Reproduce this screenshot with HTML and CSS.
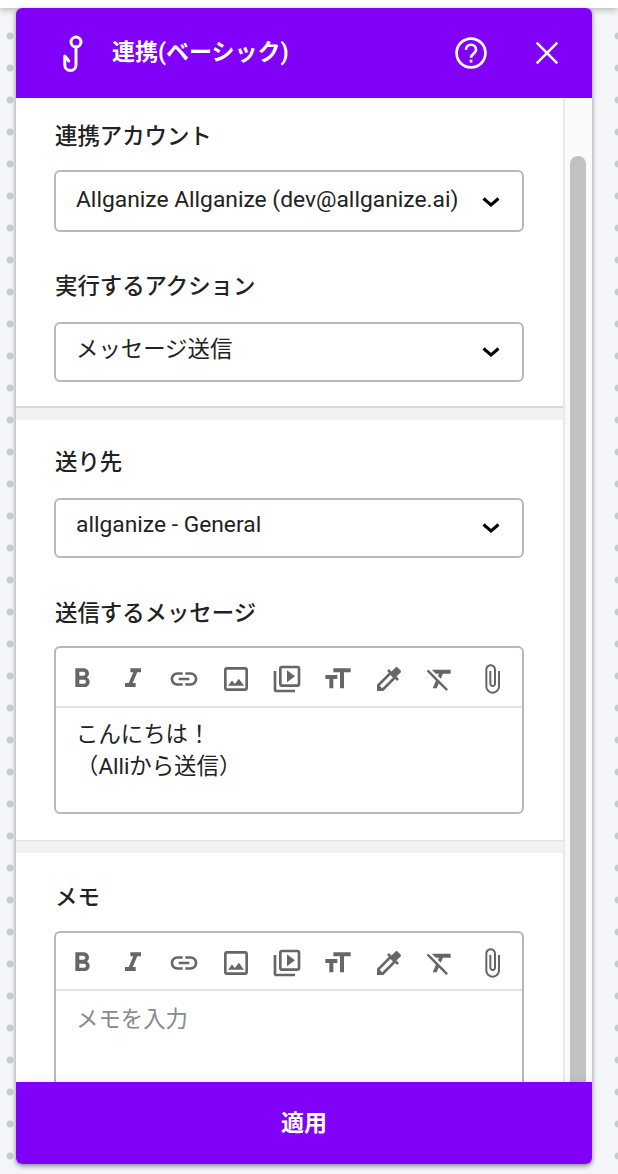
FILE: index.html
```html
<!DOCTYPE html>
<html lang="ja">
<head>
<meta charset="utf-8">
<title>連携(ベーシック)</title>
<link rel="stylesheet" href="styles.css">
</head>
<body>
<svg class="defs" width="0" height="0" aria-hidden="true">
  <symbol id="i-bold" viewBox="0 0 24 24"><path d="M15.6 10.79c.97-.67 1.65-1.77 1.65-2.79 0-2.26-1.75-4-4-4H7v14h7.04c2.09 0 3.71-1.7 3.71-3.79 0-1.52-.86-2.82-2.15-3.42zM10 6.5h3c.83 0 1.5.67 1.5 1.5s-.67 1.5-1.5 1.5h-3v-3zm3.5 9H10v-3h3.5c.83 0 1.5.67 1.5 1.5s-.67 1.5-1.5 1.5z"/></symbol>
  <symbol id="i-italic" viewBox="0 0 24 24"><path d="M10 4v3h2.21l-3.42 8H6v3h8v-3h-2.21l3.42-8H18V4z"/></symbol>
  <symbol id="i-link" viewBox="0 0 24 24"><path d="M3.9 12c0-1.71 1.39-3.1 3.1-3.1h4V7H7c-2.76 0-5 2.24-5 5s2.24 5 5 5h4v-1.9H7c-1.71 0-3.1-1.39-3.1-3.1zM8 13h8v-2H8v2zm9-6h-4v1.9h4c1.71 0 3.1 1.39 3.1 3.1s-1.39 3.1-3.1 3.1h-4V17h4c2.76 0 5-2.24 5-5s-2.24-5-5-5z"/></symbol>
  <symbol id="i-image" viewBox="0 0 24 24"><path d="M19 5v14H5V5h14m0-2H5c-1.1 0-2 .9-2 2v14c0 1.1.9 2 2 2h14c1.1 0 2-.9 2-2V5c0-1.1-.9-2-2-2zm-4.86 8.86l-3 3.87L9 13.14 6 17h12l-3.86-5.14z"/></symbol>
  <symbol id="i-video" viewBox="0 0 24 24"><path d="M4 6H2v14c0 1.1.9 2 2 2h14v-2H4V6zm16-4H8c-1.1 0-2 .9-2 2v12c0 1.1.9 2 2 2h12c1.1 0 2-.9 2-2V4c0-1.1-.9-2-2-2zm0 14H8V4h12v12zM12 5.5v9l6-4.5z"/></symbol>
  <symbol id="i-size" viewBox="0 0 24 24"><path transform="matrix(-1 0 0 1 24 0)" d="M2.5 4v3h5v12h3V7h5V4h-13zm19 5h-9v3h3v7h3v-7h3V9z"/></symbol>
  <symbol id="i-color" viewBox="0 0 24 24"><path d="M20.71 5.63l-2.34-2.34c-.39-.39-1.02-.39-1.41 0l-3.12 3.12-1.93-1.91-1.41 1.41 1.42 1.42L3 16.25V21h4.75l8.92-8.92 1.42 1.42 1.41-1.41-1.92-1.92 3.12-3.12c.4-.4.4-1.03.01-1.42zM6.92 19L5 17.08l8.06-8.06 1.92 1.92L6.92 19z"/></symbol>
  <symbol id="i-clear" viewBox="0 0 24 24"><path d="M3.27 5L2 6.27l6.97 6.97L6.5 19h3l1.57-3.66L16.73 21 18 19.73 3.55 5.27 3.27 5zM6 5v.18L8.82 8h2.4l-.72 1.68 2.1 2.1L14.21 8H20V5H6z"/></symbol>
  <symbol id="i-attach" viewBox="0 0 24 24"><path d="M16.5 6v11.5c0 2.21-1.79 4-4 4s-4-1.79-4-4V5c0-1.38 1.12-2.5 2.5-2.5s2.5 1.12 2.5 2.5v10.5c0 .55-.45 1-1 1s-1-.45-1-1V6H10v9.5c0 1.38 1.12 2.5 2.5 2.5s2.5-1.12 2.5-2.5V5c0-2.21-1.79-4-4-4S7 2.79 7 5v12.5c0 3.04 2.46 5.5 5.5 5.5s5.5-2.46 5.5-5.5V6h-1.5z"/></symbol>
  <symbol id="i-chevron" viewBox="0 0 18 10"><path d="M1.5 1.5 9 8l7.5-6.5" fill="none" stroke="#000" stroke-width="3"/></symbol>
</svg>

<div class="topbar"></div>

<section class="panel">
  <header class="panel-head">
    <svg class="hook" width="24" height="40" viewBox="0 0 24 40" fill="none" stroke="#fff" stroke-width="3" stroke-linecap="round" stroke-linejoin="round"><circle cx="14" cy="9" r="5"/><path d="M14 14v18a5.6 5.6 0 0 1-11.2 0v-9l4 5"/></svg>
    <h1 class="panel-title">連携(ベーシック)</h1>
    <svg class="head-help" width="38" height="38" viewBox="0 0 24 24" fill="none" stroke="#fff" stroke-width="1.7"><circle cx="12" cy="12" r="9.1"/><path d="M8.8 10a3.2 3.2 0 0 1 6.4 0c0 2.3-3.2 2.5-3.2 5"/><path d="M12 16.2v1.8"/></svg>
    <svg class="head-close" width="38" height="38" viewBox="0 0 24 24" fill="none" stroke="#fff" stroke-width="1.6"><path d="M5.5 5.5l13 13M18.5 5.5l-13 13"/></svg>
  </header>

  <div class="panel-body">
    <div class="content">
      <div class="section section-a">
        <div class="label label-first">連携アカウント</div>
        <div class="select select-tall"><span>Allganize Allganize (dev@allganize.ai)</span><svg class="chevron"><use href="#i-chevron"/></svg></div>
        <div class="label label-next">実行するアクション</div>
        <div class="select select-cjk"><span>メッセージ送信</span><svg class="chevron"><use href="#i-chevron"/></svg></div>
      </div>
      <div class="section section-b">
        <div class="label label-first">送り先</div>
        <div class="select select-latin"><span>allganize - General</span><svg class="chevron"><use href="#i-chevron"/></svg></div>
        <div class="label label-next label-editor">送信するメッセージ</div>
        <div class="editor">
          <div class="toolbar">
            <svg class="tool"><use href="#i-bold"/></svg>
            <svg class="tool"><use href="#i-italic"/></svg>
            <svg class="tool"><use href="#i-link"/></svg>
            <svg class="tool"><use href="#i-image"/></svg>
            <svg class="tool"><use href="#i-video"/></svg>
            <svg class="tool"><use href="#i-size"/></svg>
            <svg class="tool"><use href="#i-color"/></svg>
            <svg class="tool"><use href="#i-clear"/></svg>
            <svg class="tool"><use href="#i-attach"/></svg>
          </div>
          <div class="editor-text">こんにちは！<br>（Alliから送信）</div>
        </div>
      </div>
      <div class="section section-c">
        <div class="label label-first">メモ</div>
        <div class="editor editor-memo">
          <div class="toolbar toolbar-memo">
            <svg class="tool"><use href="#i-bold"/></svg>
            <svg class="tool"><use href="#i-italic"/></svg>
            <svg class="tool"><use href="#i-link"/></svg>
            <svg class="tool"><use href="#i-image"/></svg>
            <svg class="tool"><use href="#i-video"/></svg>
            <svg class="tool"><use href="#i-size"/></svg>
            <svg class="tool"><use href="#i-color"/></svg>
            <svg class="tool"><use href="#i-clear"/></svg>
            <svg class="tool"><use href="#i-attach"/></svg>
          </div>
          <div class="editor-text placeholder">メモを入力</div>
        </div>
      </div>
    </div>
    <div class="scrollbar"><div class="thumb"></div></div>
  </div>

  <footer class="panel-foot">適用</footer>
</section>
</body>
</html>
```

FILE: styles.css
```css
* { box-sizing: border-box; }

html, body { margin: 0; padding: 0; }

body {
  width: 618px;
  height: 1174px;
  overflow: hidden;
  font-family: Roboto, "Noto Sans CJK JP", sans-serif;
  color: #222;
  background-color: #f4f5f9;
  background-image: radial-gradient(circle at 10px 4px, #c4ccd6 0, #c4ccd6 3px, transparent 4px);
  background-size: 32px 32px;
}

.defs { position: absolute; }

.topbar {
  height: 8px;
  background: #fff;
  box-shadow: 0 2px 6px rgba(0, 0, 0, .25);
}

.panel {
  display: flex;
  flex-direction: column;
  width: 576px;
  height: 1156px;
  margin-left: 16px;
  border-radius: 6px;
  overflow: hidden;
  background: #fff;
  box-shadow: 0 2px 5px rgba(0, 0, 0, .45);
}

.panel-head {
  flex: none;
  display: flex;
  align-items: center;
  height: 90px;
  background: #8000f8;
  color: #fff;
}

.hook { margin-left: 46px; flex: none; }

.panel-title {
  flex: 1;
  margin: 0 0 0 26px;
  font-size: 23px;
  font-weight: 700;
  line-height: 90px;
}

.head-help { flex: none; margin-right: 38px; }
.head-close { flex: none; margin-right: 26px; }

.panel-body {
  flex: 1;
  min-height: 0;
  display: flex;
  overflow: hidden;
}

.content {
  flex: 1;
  min-width: 0;
  overflow: hidden;
}

.section { padding: 0 39px 0 38px; }
.section-a { height: 308px; padding-top: 24px; }
.section-b {
  height: 434px;
  padding-top: 28px;
  border-top: 2px solid #d8d8d8;
}
.section-b::before {
  content: "";
  display: block;
  height: 12px;
  margin: -28px -39px 28px -38px;
  background: #f2f2f2;
}
.section-c { padding-top: 30px; }
.section-c::before {
  content: "";
  display: block;
  height: 12px;
  margin: -30px -39px 30px -38px;
  background: #f2f2f2;
  border-top: 1px solid #e4e4e4;
}

.label {
  margin-left: 1px;
  font-size: 22.4px;
  line-height: 28px;
  font-weight: 500;
  white-space: nowrap;
}
.label-first { margin-bottom: 20px; }
.section-b .label-first { margin-bottom: 22px; }
.label-next { margin-top: 40px; margin-bottom: 22px; }
.label-editor { margin-top: 41px; margin-bottom: 19px; }

.select {
  display: flex;
  align-items: center;
  justify-content: space-between;
  width: 470px;
  height: 60px;
  padding: 0 22px 4px 20px;
  border: 2px solid #b8b8b8;
  border-radius: 6px;
  font-size: 22.8px;
  color: #222;
  white-space: nowrap;
  background: #fff;
}
.select-tall { height: 62px; }
.select-cjk { padding-bottom: 10px; font-size: 22.4px; }
.select-latin { padding-bottom: 8px; }

.chevron {
  flex: none;
  width: 18px;
  height: 10px;
  position: relative;
  top: 2px;
}
.select-tall .chevron { top: 3px; }
.select-cjk .chevron { top: 5px; }
.select-latin .chevron { top: 4px; }

.editor {
  width: 470px;
  height: 168px;
  border: 2px solid #b8b8b8;
  border-radius: 6px;
  overflow: hidden;
  background: #fff;
}
.editor-memo { height: 300px; }

.toolbar {
  display: flex;
  align-items: center;
  gap: 19.2px;
  height: 60px;
  padding: 3px 0 0 10px;
  border-bottom: 2px solid #e2e2e2;
}
.toolbar-memo { height: 58px; padding-top: 4px; }

.tool {
  flex: none;
  width: 32px;
  height: 32px;
  fill: #666;
}

.editor-text {
  padding: 10px 20px 0;
  font-size: 22.4px;
  line-height: 32px;
  color: #222;
}

.placeholder { padding-top: 12px; color: #8a8a8a; }

.scrollbar {
  flex: none;
  width: 29px;
  padding: 58px 6px 0 5px;
  background: #fafafa;
  border-left: 2px solid #e8e8e8;
}

.thumb {
  height: 1000px;
  border-radius: 8px;
  background: #c1c1c1;
}

.panel-foot {
  flex: none;
  height: 82px;
  padding-bottom: 4px;
  display: flex;
  align-items: center;
  justify-content: center;
  background: #8000f8;
  color: #fff;
  font-size: 23px;
  font-weight: 700;
  box-shadow: 0 -2px 6px rgba(0, 0, 0, .06);
}
```
